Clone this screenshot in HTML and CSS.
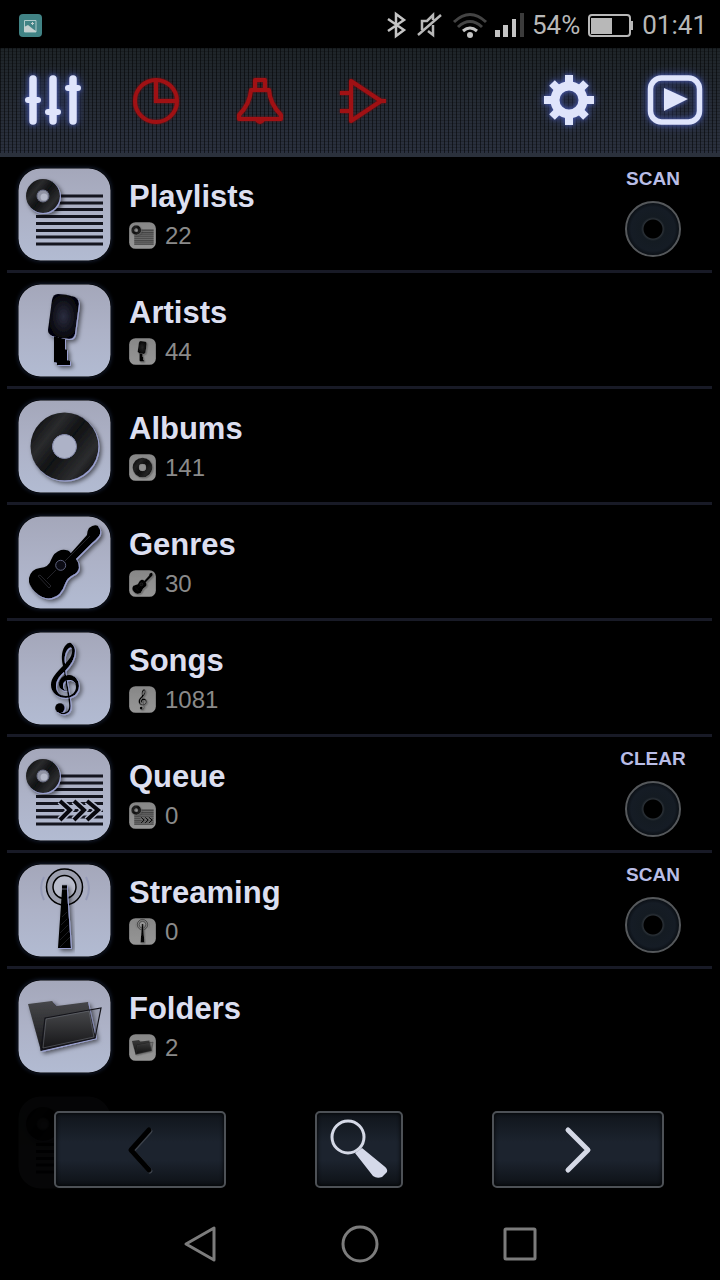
FILE: index.html
```html
<!DOCTYPE html>
<html lang="en">
<head>
  <meta charset="UTF-8">
  <title>Music Library</title>
  <meta name="viewport" content="width=device-width, initial-scale=1.0">
  <link rel="stylesheet" href="styles.css">
</head>
<body>
  <!-- shared icon artwork, used big in the tile and small beside the count -->
  <svg class="sprite" aria-hidden="true">
    <defs>
      <linearGradient id="tile" x1="0" y1="0" x2="0" y2="1">
        <stop offset="0" stop-color="#a4a7ba" />
        <stop offset="0.5" stop-color="#adb2c7" />
        <stop offset="1" stop-color="#b2bbd2" />
      </linearGradient>
      <linearGradient id="vinyl" x1="0" y1="0.1" x2="1" y2="0.9">
        <stop offset="0" stop-color="#08080a" />
        <stop offset="0.28" stop-color="#2a2b2d" />
        <stop offset="0.5" stop-color="#101113" />
        <stop offset="0.78" stop-color="#2c2d2f" />
        <stop offset="1" stop-color="#050506" />
      </linearGradient>
      <radialGradient id="mic">
        <stop offset="0" stop-color="#2b2d3f" />
        <stop offset="1" stop-color="#05050a" />
      </radialGradient>
      <linearGradient id="folder" x1="0" y1="0" x2="0" y2="1">
        <stop offset="0" stop-color="#46474a" />
        <stop offset="1" stop-color="#161618" />
      </linearGradient>
      <filter id="shadow" x="-20%" y="-20%" width="150%" height="150%">
        <feDropShadow dx="1" dy="1" stdDeviation="0.3" flood-color="#9aa0d0" />
        <feDropShadow dx="2" dy="2" stdDeviation="2" flood-color="#000" flood-opacity="0.55" />
      </filter>
    </defs>

    <symbol id="icon-playlists" viewBox="0 0 93 93">
      <rect x="0.5" y="0.5" width="92" height="92" rx="22" fill="url(#tile)" />
      <path d="M20 28H85M20 35H85M20 41.500H85M18 48.500H85M18 55.500H85M18 62.500H85M18 69H85M18 76H85" stroke="#14151f" stroke-width="3" />
      <g filter="url(#shadow)">
        <path fill="url(#vinyl)" fill-rule="evenodd" d="M8 28a17 17 0 1 0 34 0a17 17 0 1 0 -34 0zM19 28a6 6 0 1 1 12 0a6 6 0 1 1 -12 0z" />
      </g>
      <circle cx="25" cy="28" r="6" fill="#9093a3" stroke="#62667c" />
      <circle cx="26" cy="29" r="3.500" fill="#b4b8c8" />
    </symbol>

    <symbol id="icon-artists" viewBox="0 0 93 93">
      <rect x="0.5" y="0.5" width="92" height="92" rx="22" fill="url(#tile)" />
      <g filter="url(#shadow)">
        <path fill="url(#mic)" d="M40 10Q48 10 57 13Q61 15 61 20L57 50Q56 55 51 55Q42 55 34 52Q30 50 30 46L34 16Q35 10 40 10z" />
        <path fill="#000" d="M36 52L47 55V65L49 66V76L52 77V81H39V79L36 78z" />
      </g>
    </symbol>

    <symbol id="icon-albums" viewBox="0 0 93 93">
      <rect x="0.5" y="0.5" width="92" height="92" rx="22" fill="url(#tile)" />
      <g filter="url(#shadow)">
        <path fill="url(#vinyl)" fill-rule="evenodd" d="M12.500 46.500a34 34 0 1 0 68 0a34 34 0 1 0 -68 0zM34.500 46.500a12 12 0 1 1 24 0a12 12 0 1 1 -24 0z" />
      </g>
      <circle cx="46.500" cy="46.500" r="12" fill="#adb2c7" stroke="#777c9c" stroke-width="0.8" />
    </symbol>

    <symbol id="icon-genres" viewBox="0 0 93 93">
      <rect x="0.5" y="0.5" width="92" height="92" rx="22" fill="url(#tile)" />
      <g filter="url(#shadow)">
        <path fill="#000" d="M71 12Q76 8 80 10Q84 15 81 20Q78 24 74 27L58 43Q61 46 61 52Q60 57 55 59Q49 62 47 68Q43 80 34 82Q25 84 17 76Q10 69 11 62Q13 53 22 52Q31 51 33 44Q36 36 43 34Q50 33 53 37L69 19Q69 15 71 12z" />
      </g>
      <circle cx="42.700" cy="49.300" r="5" fill="#0b0b14" stroke="#5d617d" />
      <path d="M20 60L31 72L33 70L22 59zM47 45L72 20M38 54L29 63" fill="none" stroke="#2c2c33" stroke-width="0.8" />
    </symbol>

    <symbol id="icon-songs" viewBox="0 0 93 93">
      <rect x="0.5" y="0.5" width="92" height="92" rx="22" fill="url(#tile)" />
      <g filter="url(#shadow)" fill="#000">
        <path d="M46 37C43 28 43 20 47 14Q50 10 53 11Q57 14 57 19C57 27 52 34 47 39C41 44 38 49 38 54C38 60 42 64 48 64C54 64 58 60 58 55C58 50 55 48 51 48C47 48 45 51 45 54Q45 58 49 59Q42 59 41 53C41 46 46 43 51 43C57 43 61 48 61 54C61 61 55 66 48 66C39 66 33 60 33 53C33 46 38 41 46 33C51 28 55 23 54 17Q53 14 50 17C46 22 46 29 48 35z" />
        <path d="M46 35C48 50 52 68 52 74C52 81 46 83 41 80" fill="none" stroke="#000" stroke-width="1.500" />
        <circle cx="42" cy="76" r="4.800" />
      </g>
    </symbol>

    <symbol id="icon-queue" viewBox="0 0 93 93">
      <use href="#icon-playlists" width="93" height="93" />
      <path d="M42 53L52 62L42 72M56 53L66 62L56 72M69 53L80 62L69 72" fill="none" stroke="#b2b8cd" stroke-width="7" />
      <path d="M42 53L52 62L42 72M56 53L66 62L56 72M69 53L80 62L69 72" fill="none" stroke="#08080e" stroke-width="4" />
    </symbol>

    <symbol id="icon-streaming" viewBox="0 0 93 93">
      <rect x="0.5" y="0.5" width="92" height="92" rx="22" fill="url(#tile)" />
      <path d="M26 13Q20 24 26 36M68 13Q74 24 68 36" fill="none" stroke="#969bb8" stroke-width="2" />
      <circle cx="46.500" cy="23" r="18" fill="#9c9fae" stroke="#000" stroke-width="1.500" />
      <circle cx="46.500" cy="23" r="11.500" fill="#b9bccb" stroke="#000" stroke-width="1.500" />
      <g filter="url(#shadow)">
        <path fill="#000" d="M44 21H49V26L53 84H40L44 26z" />
      </g>
      <path d="M42 69L50 61M42 76L51 67M42 83L52 73M43 61L49 55M44 53L49 48" stroke="#222328" stroke-width="0.8" />
      <path d="M44 21H49M44 25H49" stroke="#8a8ea2" stroke-width="0.7" />
    </symbol>

    <symbol id="icon-folders" viewBox="0 0 93 93">
      <rect x="0.5" y="0.5" width="92" height="92" rx="22" fill="url(#tile)" />
      <g filter="url(#shadow)">
        <path fill="url(#folder)" d="M10 24L34 21L39 26L70 22L78 58L23 71z" />
      </g>
      <path d="M27 38L83 28L77 58L23 70z" fill="#000" fill-opacity="0.12" stroke="#14141a" stroke-width="1.200" />
      <path d="M28 39L71 31L76 57L25 68z" fill="url(#folder)" stroke="#777a85" stroke-width="0.5" />
    </symbol>
  </svg>

  <header class="status-bar">
    <svg width="23" height="23" viewBox="0 0 23 23">
      <rect width="23" height="23" rx="4" fill="#418385" />
      <path d="M5.500 6.500H17V18H5.500z" fill="none" stroke="#aecaca" />
      <path d="M5 18V13L9 11L14 15L17 17V18z" fill="#c3cfcf" />
      <path d="M13.500 8V11M12 9.500H15" stroke="#c3cfcf" />
    </svg>
    <div class="status-icons">
      <svg width="22" height="26" viewBox="0 0 22 26" fill="none" stroke="#c4c4c4" stroke-width="2.500">
        <path d="M1 7L17 18L9 24V2L17 8L1 19" />
      </svg>
      <svg width="28" height="26" viewBox="0 0 28 26" fill="none" stroke="#b8b8b8" stroke-width="2.500">
        <path d="M1 23L24 3M5 18V9H10L16 3V8M16 13V23L11 19" />
      </svg>
      <svg width="34" height="26" viewBox="0 0 34 26" fill="none" stroke-width="3">
        <path d="M1 10Q17 -5 33 10M5 15Q17 4 29 15" stroke="#444" />
        <path d="M10 19Q17 13 24 19" stroke="#c4c4c4" />
        <circle cx="17" cy="23" r="3" fill="#c4c4c4" />
      </svg>
      <svg width="29" height="26" viewBox="0 0 29 26" fill="#c4c4c4">
        <path d="M0 18H5V25H0zM8 13H13V25H8zM17 7H21V25H17z" />
        <path d="M25 1H29V25H25z" fill="#3b3b3b" />
      </svg>
      <span>54%</span>
      <svg width="46" height="24" viewBox="0 0 46 24">
        <rect x="1" y="2" width="41" height="21" rx="3" fill="none" stroke="#b8b8b8" stroke-width="2" />
        <path d="M3 5H24V21H3z" fill="#b8b8b8" />
        <path d="M42 8H45V17H42z" fill="#b8b8b8" />
      </svg>
      <span>01:41</span>
    </div>
  </header>

  <nav class="toolbar">
    <button class="tool lit" aria-label="Equalizer">
      <svg width="56" height="52" viewBox="0 1 56 52" fill="none" stroke="#dfe4fb" stroke-linecap="round">
        <path d="M9 5V47M29 5V47M49 5V47" stroke-width="7.500" />
        <path d="M4 26H14M24 38H34M44 14H54" stroke-width="6" />
      </svg>
    </button>
    <button class="tool off" aria-label="Sleep timer">
      <svg width="56" height="52" viewBox="0 1 56 52" fill="none" stroke="#a01114" stroke-width="4">
        <circle cx="28" cy="27" r="21" />
        <path d="M28 6V27H49" />
      </svg>
    </button>
    <button class="tool off" aria-label="Alarm">
      <svg width="56" height="52" viewBox="0 1 56 52" fill="none" stroke="#a01114" stroke-width="4" stroke-linejoin="round">
        <path d="M23 16V6H33V16M19 16H37Q38 30 49 41V45H7V41Q18 30 19 16zM25 46Q28 50 31 46" />
      </svg>
    </button>
    <button class="tool off" aria-label="Amplifier">
      <svg width="56" height="52" viewBox="0 1 56 52" fill="none" stroke="#a01114" stroke-width="4" stroke-linejoin="round">
        <path d="M15 7V47L45 27zM4 19H15M4 37H15M45 27H50" />
      </svg>
    </button>
    <button class="tool lit settings" aria-label="Settings">
      <svg width="56" height="52" viewBox="0 1 56 52" fill="none" stroke="#dfe4fb">
        <circle cx="26" cy="26" r="14" stroke-width="9" />
        <path d="M26 1V10M26 42V51M1 26H10M42 26H51M9 9L15 15M37 37L43 43M43 9L37 15M15 37L9 43" stroke-width="8" />
      </svg>
    </button>
    <button class="tool lit" aria-label="Now playing">
      <svg width="56" height="52" viewBox="0 1 56 52">
        <rect x="3.500" y="4" width="49" height="44" rx="11" fill="none" stroke="#dfe4fb" stroke-width="5.500" />
        <path d="M17 14L41 25L17 37z" fill="#dfe4fb" />
      </svg>
    </button>
  </nav>

  <main class="library">
    <ul class="list">
      <li class="row">
        <a class="entry" href="#playlists">
          <svg class="cover"><use href="#icon-playlists" /></svg>
          <span class="info">
            <span class="name">Playlists</span>
            <span class="count"><svg class="mini"><use href="#icon-playlists" /></svg>22</span>
          </span>
        </a>
        <button class="action">SCAN<span class="knob"></span></button>
      </li>
      <li class="row">
        <a class="entry" href="#artists">
          <svg class="cover"><use href="#icon-artists" /></svg>
          <span class="info">
            <span class="name">Artists</span>
            <span class="count"><svg class="mini"><use href="#icon-artists" /></svg>44</span>
          </span>
        </a>
      </li>
      <li class="row">
        <a class="entry" href="#albums">
          <svg class="cover"><use href="#icon-albums" /></svg>
          <span class="info">
            <span class="name">Albums</span>
            <span class="count"><svg class="mini"><use href="#icon-albums" /></svg>141</span>
          </span>
        </a>
      </li>
      <li class="row">
        <a class="entry" href="#genres">
          <svg class="cover"><use href="#icon-genres" /></svg>
          <span class="info">
            <span class="name">Genres</span>
            <span class="count"><svg class="mini"><use href="#icon-genres" /></svg>30</span>
          </span>
        </a>
      </li>
      <li class="row">
        <a class="entry" href="#songs">
          <svg class="cover"><use href="#icon-songs" /></svg>
          <span class="info">
            <span class="name">Songs</span>
            <span class="count"><svg class="mini"><use href="#icon-songs" /></svg>1081</span>
          </span>
        </a>
      </li>
      <li class="row">
        <a class="entry" href="#queue">
          <svg class="cover"><use href="#icon-queue" /></svg>
          <span class="info">
            <span class="name">Queue</span>
            <span class="count"><svg class="mini"><use href="#icon-queue" /></svg>0</span>
          </span>
        </a>
        <button class="action">CLEAR<span class="knob"></span></button>
      </li>
      <li class="row">
        <a class="entry" href="#streaming">
          <svg class="cover"><use href="#icon-streaming" /></svg>
          <span class="info">
            <span class="name">Streaming</span>
            <span class="count"><svg class="mini"><use href="#icon-streaming" /></svg>0</span>
          </span>
        </a>
        <button class="action">SCAN<span class="knob"></span></button>
      </li>
      <li class="row last">
        <a class="entry" href="#folders">
          <svg class="cover"><use href="#icon-folders" /></svg>
          <span class="info">
            <span class="name">Folders</span>
            <span class="count"><svg class="mini"><use href="#icon-folders" /></svg>2</span>
          </span>
        </a>
      </li>
      <!-- next row, faded out under the pager -->
      <li class="row last faded" aria-hidden="true">
        <svg class="cover"><use href="#icon-playlists" /></svg>
      </li>
    </ul>

    <div class="pager">
      <button class="page-btn" aria-label="Previous">
        <svg width="30" height="52" viewBox="0 0 30 52" fill="none" stroke-width="5" stroke-linecap="round" stroke-linejoin="round">
          <path d="M25 7L7 27L25 47" stroke="#3c424b" />
          <path d="M24 6L6 26L24 46" stroke="#000" />
        </svg>
      </button>
      <button class="page-btn search" aria-label="Search">
        <svg width="60" height="62" viewBox="0 0 60 62">
          <circle cx="19" cy="18" r="16" fill="none" stroke="#d5d9e6" stroke-width="3" />
          <path d="M26 34L33 29L55 47Q59 50 58 53L53 58Q48 60 44 57z" fill="#d5d9e9" />
        </svg>
      </button>
      <button class="page-btn" aria-label="Next">
        <svg width="30" height="52" viewBox="0 0 30 52" fill="none" stroke="#d5d9e6" stroke-width="5" stroke-linecap="round" stroke-linejoin="round">
          <path d="M5 6L25 26L5 46" />
        </svg>
      </button>
    </div>
  </main>

  <nav class="system-nav">
    <button aria-label="Back">
      <svg width="40" height="40" viewBox="0 0 40 40"><path d="M6 20L34 4V36z" /></svg>
    </button>
    <button aria-label="Home">
      <svg width="40" height="40" viewBox="0 0 40 40"><circle cx="20" cy="20" r="17" /></svg>
    </button>
    <button aria-label="Recent apps">
      <svg width="40" height="40" viewBox="0 0 40 40"><rect x="5" y="5" width="30" height="30" rx="1" /></svg>
    </button>
  </nav>
</body>
</html>
```

FILE: styles.css
```css
* {
  box-sizing: border-box;
}
body {
  margin: 0;
  min-height: 100vh;
  display: flex;
  flex-direction: column;
  font-family: "Liberation Sans", Arial, sans-serif;
  background: #000;
  color: #dcdff0;
}
button {
  margin: 0;
  padding: 0;
  border: none;
  background: none;
  font-family: inherit;
  color: inherit;
  cursor: pointer;
}
svg {
  display: block;
  flex-shrink: 0;
}
.sprite {
  position: absolute;
  width: 0;
  height: 0;
}

/* status bar */
.status-bar {
  height: 48px;
  padding: 2px 13px 0 19px;
  display: flex;
  justify-content: space-between;
  align-items: center;
  font-family: Roboto, sans-serif;
  font-size: 26px;
  color: #b8b8b8;
}
.status-icons {
  display: flex;
  align-items: center;
  gap: 8px;
}
.status-icons svg {
  overflow: visible;
}

/* toolbar */
.toolbar {
  height: 109px;
  padding: 0 17px 0 24px;
  display: flex;
  align-items: center;
  gap: 48px;
  border-bottom: 4px solid #2b313c;
  background:
    repeating-linear-gradient(90deg, rgba(0,0,0,0.5) 0 1px, transparent 1px 4px),
    repeating-linear-gradient(rgba(0,0,0,0.2) 0 1px, transparent 1px 3px),
    linear-gradient(#1e2428, #252b34 50%, #2a303e);
}
.tool {
  width: 56px;
}
.settings {
  margin-left: auto;
}
.lit svg {
  overflow: visible;
  filter: drop-shadow(0 0 2px #4b5cb0) drop-shadow(0 0 5px #35427e);
}
.off svg {
  filter: drop-shadow(0 0 1px #7a0a0c);
}

/* library list */
.library {
  position: relative;
  flex: 1;
}
.list {
  list-style: none;
  margin: 0 8px 0 7px;
  padding: 0;
}
.row {
  height: 116px;
  display: flex;
  align-items: flex-start;
  border-bottom: 3px solid #181a26;
}
.row.last {
  border-color: transparent;
}
.entry {
  flex: 1;
  display: flex;
  gap: 18px;
  padding: 11px;
  color: inherit;
  text-decoration: none;
}
.cover {
  width: 93px;
  height: 93px;
  border-radius: 22px;
  box-shadow: 0 0 4px #1c2740;
}
.info {
  padding-top: 10px;
}
.name {
  display: block;
  margin-bottom: 6px;
  font-size: 31px;
  font-weight: bold;
  line-height: 38px;
}
.count {
  display: flex;
  align-items: center;
  gap: 9px;
  font-size: 24px;
  line-height: 26px;
  color: #8a8a8a;
}
.mini {
  width: 27px;
  height: 27px;
  filter: grayscale(1) brightness(0.8);
}
.action {
  width: 118px;
  padding-top: 10px;
  font-size: 19px;
  font-weight: bold;
  line-height: 24px;
  color: #b9bde6;
}
.knob {
  display: block;
  width: 56px;
  height: 56px;
  margin: 10px auto 0;
  border: 2px solid #55585b;
  border-radius: 50%;
  background: radial-gradient(circle, #000 0 9px, #2a3036 10px, #141b22 12px, #151c25 22px, #090d12 27px);
}
.faded {
  padding: 11px;
  opacity: 0.03;
}

/* pager */
.pager {
  position: absolute;
  left: 0;
  right: 0;
  bottom: 20px;
  padding: 0 56px 0 54px;
  display: flex;
  justify-content: space-between;
}
.page-btn {
  width: 172px;
  height: 77px;
  display: flex;
  justify-content: center;
  align-items: center;
  border: 2px solid #4d5156;
  border-radius: 5px;
  background: linear-gradient(#10151b, #1c232e 40%, #1c232e 65%, #0d1116);
  box-shadow: inset 0 0 4px #000;
}
.search {
  width: 88px;
}

/* android buttons */
.system-nav {
  height: 72px;
  display: flex;
  justify-content: center;
  align-items: center;
}
.system-nav button {
  width: 160px;
  display: flex;
  justify-content: center;
}
.system-nav svg {
  fill: none;
  stroke: #7c7c7c;
  stroke-width: 3;
  stroke-linejoin: round;
}
```
